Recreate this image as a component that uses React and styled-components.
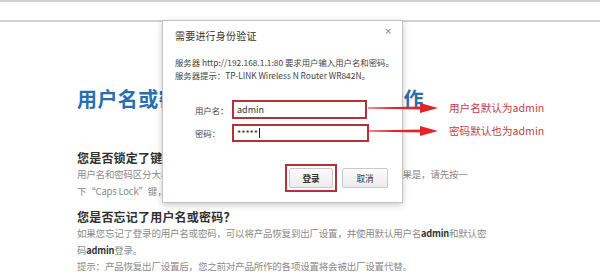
import React from 'react';
import styled, { createGlobalStyle } from 'styled-components';

const Global = createGlobalStyle`
  html, body {
    margin: 0;
    padding: 0;
    background: #ffffff;
  }
  body {
    font-family: "Noto Sans CJK SC", "Noto Sans", sans-serif;
  }
`;

const Page = styled.div`
  position: relative;
  width: 600px;
  height: 278px;
  overflow: hidden;
  background: #fff;
`;

const TopBar = styled.div`
  height: 18px;
  border-top: 2px solid #d2d2d2;
  border-bottom: 2px solid #d0d0d0;
  background: #fff;
`;

const Content = styled.div`
  padding: 65px 0 0 77px;
  display: flex;
  flex-direction: column;
`;

const BigTitle = styled.h1`
  margin: 0 0 39px 0;
  font-size: 20px;
  line-height: 24px;
  font-weight: 700;
  letter-spacing: 0.4px;
  color: #2a6fad;
  white-space: nowrap;
`;

const Section = styled.div`
  display: flex;
  flex-direction: column;
  margin-bottom: ${p => p.gap || 0}px;
`;

const SubTitle = styled.h2`
  margin: 0;
  font-size: 12px;
  line-height: 16px;
  font-weight: 700;
  letter-spacing: 0.2px;
  color: #2f2f2f;
  white-space: nowrap;
`;

const Line = styled.p`
  margin: 0;
  font-size: 9.5px;
  line-height: 16.5px;
  letter-spacing: -0.2px;
  color: #8a8a8a;
  white-space: nowrap;

  b {
    color: #333;
    font-weight: 700;
    font-size: 9.2px;
  }
`;

const Dialog = styled.div`
  position: absolute;
  left: 162px;
  top: 20px;
  width: 241px;
  height: 183px;
  box-sizing: border-box;
  background: #fff;
  border: 1px solid #c4c4c4;
  box-shadow: 0 2px 6px rgba(0, 0, 0, 0.22);
  padding: 8px 12px 0 12px;
  display: flex;
  flex-direction: column;
`;

const DialogHead = styled.div`
  display: flex;
  justify-content: space-between;
  align-items: flex-start;
`;

const DialogTitle = styled.div`
  font-size: 10px;
  line-height: 14px;
  color: #333;
  letter-spacing: 0.2px;
`;

const Close = styled.span`
  font-family: "DejaVu Sans", sans-serif;
  font-size: 9px;
  line-height: 9px;
  color: #777;
  margin-top: -2px;
  margin-right: -2px;
`;

const Info = styled.div`
  margin-top: 13px;
  font-size: 8.4px;
  line-height: 13px;
  color: #444;
  white-space: nowrap;
`;

const Form = styled.div`
  margin-top: 18px;
  padding-left: 20px;
  display: flex;
  flex-direction: column;
  gap: 5px;
`;

const Row = styled.div`
  display: flex;
  align-items: center;
  gap: 3px;
`;

const Label = styled.span`
  flex: 0 0 34px;
  font-size: 8.4px;
  line-height: 12px;
  color: #444;
  white-space: nowrap;
`;

const Field = styled.div`
  flex: 0 0 ${p => p.w}px;
  height: ${p => p.h}px;
  box-sizing: border-box;
  border: 2px solid #b3303c;
  background: #fff;
  display: flex;
  align-items: center;
  padding-left: 3px;
  font-size: 9px;
  color: #333;
`;

const Caret = styled.span`
  display: inline-block;
  width: 1px;
  height: 10px;
  background: #222;
  margin-left: 1px;
`;

const Buttons = styled.div`
  margin-top: 22px;
  display: flex;
  justify-content: flex-end;
  align-items: center;
  gap: 5px;
  padding-right: 2px;
`;

const Highlight = styled.div`
  border: 2px solid #b3303c;
  padding: 2px;
  display: flex;
`;

const Button = styled.button`
  width: ${p => p.w || 44}px;
  height: 20px;
  padding: 0;
  border: 1px solid #c9c9c9;
  border-radius: 2px;
  background: linear-gradient(#fbfbfb, #ececec);
  font-family: "Noto Sans CJK SC", sans-serif;
  font-size: 8.6px;
  line-height: 18px;
  font-weight: ${p => (p.primary ? 700 : 400)};
  color: #333;
`;

const Arrows = styled.svg`
  position: absolute;
  left: 366px;
  top: 98px;
`;

const Note = styled.div`
  position: absolute;
  left: 449px;
  top: ${p => p.y}px;
  font-size: 10.6px;
  line-height: 14px;
  color: #c43c46;
  white-space: nowrap;
`;

function Arrow({ y }) {
  return (
    <g>
      <polygon points={`2,${y - 0.5} 56,${y - 1.6} 56,${y + 1.6} 2,${y + 0.5}`} fill="#e0262b" />
      <polygon points={`54,${y - 5} 72,${y} 54,${y + 5}`} fill="#e0262b" />
    </g>
  );
}

export default function App() {
  return (
    <Page>
      <Global />
      <TopBar />
      <Content>
        <BigTitle>用户名或密码错误，无法完成您的操作</BigTitle>
        <Section gap={10}>
          <SubTitle>您是否锁定了键盘大小写？</SubTitle>
          <Line>用户名和密码区分大小写，请检查一下您的键盘是否已锁定了大写字母输入。如果是，请先按一</Line>
          <Line>下“Caps Lock”键，然后重新输入用户名和密码。</Line>
        </Section>
        <Section>
          <SubTitle>您是否忘记了用户名或密码？</SubTitle>
          <Line>如果您忘记了登录的用户名或密码，可以将产品恢复到出厂设置，并使用默认用户名<b>admin</b>和默认密</Line>
          <Line>码<b>admin</b>登录。</Line>
          <Line>提示：产品恢复出厂设置后，您之前对产品所作的各项设置将会被出厂设置代替。</Line>
        </Section>
      </Content>

      <Dialog>
        <DialogHead>
          <DialogTitle>需要进行身份验证</DialogTitle>
          <Close>×</Close>
        </DialogHead>
        <Info>
          服务器 http://192.168.1.1:80 要求用户输入用户名和密码。
          <br />
          服务器提示：TP-LINK Wireless N Router WR842N。
        </Info>
        <Form>
          <Row>
            <Label>用户名：</Label>
            <Field w={135} h={19}>admin</Field>
          </Row>
          <Row>
            <Label>密码：</Label>
            <Field w={137} h={18}>
              *****<Caret />
            </Field>
          </Row>
        </Form>
        <Buttons>
          <Highlight>
            <Button primary>登录</Button>
          </Highlight>
          <Button w={46}>取消</Button>
        </Buttons>
      </Dialog>

      <Arrows width="76" height="44" viewBox="0 0 76 44">
        <Arrow y={10} />
        <Arrow y={33} />
      </Arrows>
      <Note y={101}>用户名默认为admin</Note>
      <Note y={124}>密码默认也为admin</Note>
    </Page>
  );
}
